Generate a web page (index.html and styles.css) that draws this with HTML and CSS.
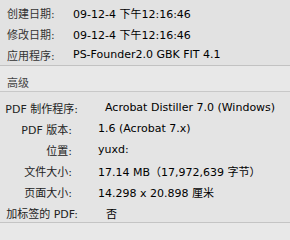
FILE: index.html
```html
<!DOCTYPE html>
<html lang="zh-CN">
<head>
    <meta charset="UTF-8">
    <title>简介</title>
    <link rel="stylesheet" href="styles.css">
</head>
<body>
    <div class="panel">
        <div class="top">
            <div class="row"><span class="key">创建日期:</span><span class="val">09-12-4 下午12:16:46</span></div>
            <div class="row"><span class="key">修改日期:</span><span class="val">09-12-4 下午12:16:46</span></div>
            <div class="row"><span class="key">应用程序:</span><span class="val">PS-Founder2.0 GBK FIT 4.1</span></div>
        </div>

        <div class="section-title">高级</div>

        <div class="details">
            <div class="row wide"><span class="key">PDF 制作程序:</span><span class="val">Acrobat Distiller 7.0 (Windows)</span></div>
            <div class="row"><span class="key">PDF 版本:</span><span class="val">1.6 (Acrobat 7.x)</span></div>
            <div class="row"><span class="key">位置:</span><span class="val">yuxd:</span></div>
            <div class="row"><span class="key">文件大小:</span><span class="val">17.14 MB（17,972,639 字节）</span></div>
            <div class="row"><span class="key">页面大小:</span><span class="val">14.298 x 20.898 厘米</span></div>
            <div class="row wide tagged"><span class="key">加标签的 PDF:</span><span class="val">否</span></div>
        </div>

        <div class="bottom"></div>
    </div>
</body>
</html>
```

FILE: styles.css
```css
* {
    margin: 0;
    padding: 0;
    box-sizing: border-box;
}

body {
    font-family: 'DejaVu Sans', 'Noto Sans CJK SC', sans-serif;
    font-size: 11px;
    color: #000;
    background-color: #e8e8e8;
}

.panel {
    width: 290px;
    height: 240px;
    display: flex;
    flex-direction: column;
}

/* Top block */
.top {
    background-color: #e2e2e2;
    padding: 2px 0 0 7px;
    height: 66px;
    border-bottom: 1px solid #c2c2c2;
}

.top .row {
    display: flex;
    height: 21px;
    align-items: center;
}

.top .key {
    width: 66px;
    color: #333;
}

/* Section header */
.section-title {
    height: 26px;
    padding: 12px 0 0 7px;
    color: #444;
    background-color: #e8e8e8;
    border-bottom: 1px solid #c8c8c8;
    line-height: 12px;
}

/* Details block */
.details {
    background-color: #e4e4e4;
    padding: 5px 0 0 0;
    height: 131px;
    border-bottom: 1px solid #c4c4c4;
}

.details .row {
    display: flex;
    height: 21px;
    align-items: center;
}

.details .key {
    width: 72px;
    text-align: right;
    color: #222;
}

.details .val {
    margin-left: 26px;
}

.details .wide .key {
    width: 78px;
}

.details .wide .val {
    margin-left: 27px;
}

.details .tagged .val {
    margin-left: 28px;
}

.bottom {
    flex: 1;
    background-color: #e8e8e8;
}
```
